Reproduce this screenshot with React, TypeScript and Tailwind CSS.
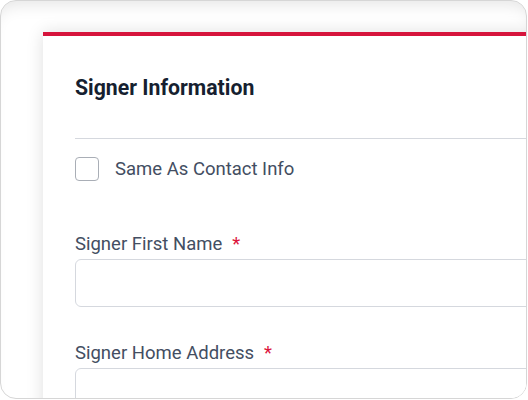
import React from "react";

function Field({ label }: { label: string }) {
  return (
    <div className="flex flex-col">
      <label className="text-[18.5px] leading-7 text-[#434e62] mb-px">
        {label}
        <span className="ml-[10px] text-[#dc143c]">*</span>
      </label>
      <div className="h-12 w-full rounded-md border border-[#d5d8de] bg-white" />
    </div>
  );
}

export default function App() {
  return (
    <div className="w-[528px] h-[400px] bg-white" style={{ fontFamily: "Roboto, 'Liberation Sans', sans-serif" }}>
      <div className="relative w-[527px] h-[399px] overflow-hidden rounded-2xl border border-[#d6d6d6] bg-white shadow-[inset_0_14px_16px_-10px_rgba(0,0,0,0.10)] pl-[42px] pt-[31px]">
        <div className="w-[620px] h-[420px] bg-white border-t-4 border-[#d6143c] shadow-[0_0_16px_rgba(0,0,0,0.13)] px-8">
          <div className="pt-[38px] pb-[36px] border-b border-[#d5d8de]">
            <h2 className="text-[21.25px] leading-7 font-bold text-[#161f30]">Signer Information</h2>
          </div>
          <div className="flex items-center gap-4 mt-4">
            <div className="w-6 h-6 rounded border border-[#a9aeb6] bg-white" />
            <span className="text-[18.5px] leading-7 text-[#434e62]">Same As Contact Info</span>
          </div>
          <div className="mt-[47px] flex flex-col gap-8">
            <Field label="Signer First Name" />
            <Field label="Signer Home Address" />
          </div>
        </div>
      </div>
    </div>
  );
}
